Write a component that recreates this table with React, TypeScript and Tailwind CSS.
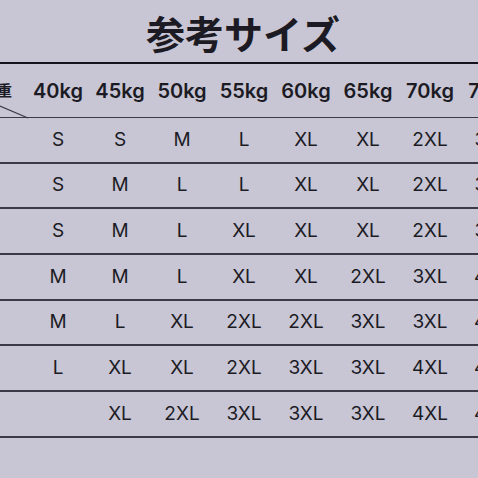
import React from "react";

const weights = ["40kg", "45kg", "50kg", "55kg", "60kg", "65kg", "70kg", "75kg"];
const rows: string[][] = [
  ["S", "S", "M", "L", "XL", "XL", "2XL", "3XL"],
  ["S", "M", "L", "L", "XL", "XL", "2XL", "3XL"],
  ["S", "M", "L", "XL", "XL", "XL", "2XL", "3XL"],
  ["M", "M", "L", "XL", "XL", "2XL", "3XL", "4XL"],
  ["M", "L", "XL", "2XL", "2XL", "3XL", "3XL", "4XL"],
  ["L", "XL", "XL", "2XL", "3XL", "3XL", "4XL", "4XL"],
  ["", "XL", "2XL", "3XL", "3XL", "3XL", "4XL", "4XL"],
];

export default function App() {
  return (
    <div className="w-[478px] h-[478px] overflow-hidden bg-[#c8c6d5] text-[#1c1b24]">
      <div
        className="h-[62px] flex items-center justify-center pl-[8px] pt-[2px] text-[39px] font-bold leading-none"
        style={{ fontFamily: '"Noto Sans CJK JP", sans-serif' }}
      >
        参考サイズ
      </div>
      <div className="w-[600px]">
        <div className="relative h-[56px] border-t-2 border-b-[1.5px] border-t-[#15141c] border-b-[#3b3a47] flex items-center">
          <div
            className="w-[27px] shrink-0 flex justify-end pr-[15px] text-[15px] font-bold whitespace-nowrap"
            style={{ fontFamily: '"Noto Sans CJK JP", sans-serif' }}
          >
            体重
          </div>
          {weights.map((w) => (
            <div
              key={w}
              className="w-[62px] shrink-0 text-center text-[20px] font-semibold"
              style={{ fontFamily: 'Inter, "Liberation Sans", sans-serif' }}
            >
              {w}
            </div>
          ))}
          <svg className="absolute left-0 top-[40px]" width="30" height="15" viewBox="0 0 30 15">
            <line x1="0" y1="2" x2="28" y2="14" stroke="#3b3a47" strokeWidth="1.2" />
          </svg>
        </div>
        {rows.map((r, i) => (
          <div
            key={i}
            className="h-[45.7px] border-b-2 border-[#3b3a47] flex items-center"
          >
            <div className="w-[27px] shrink-0" />
            {r.map((s, j) => (
              <div
                key={j}
                className="w-[62px] shrink-0 text-center text-[19px] font-normal"
                style={{ fontFamily: 'Inter, "Liberation Sans", sans-serif' }}
              >
                {s}
              </div>
            ))}
          </div>
        ))}
      </div>
    </div>
  );
}
